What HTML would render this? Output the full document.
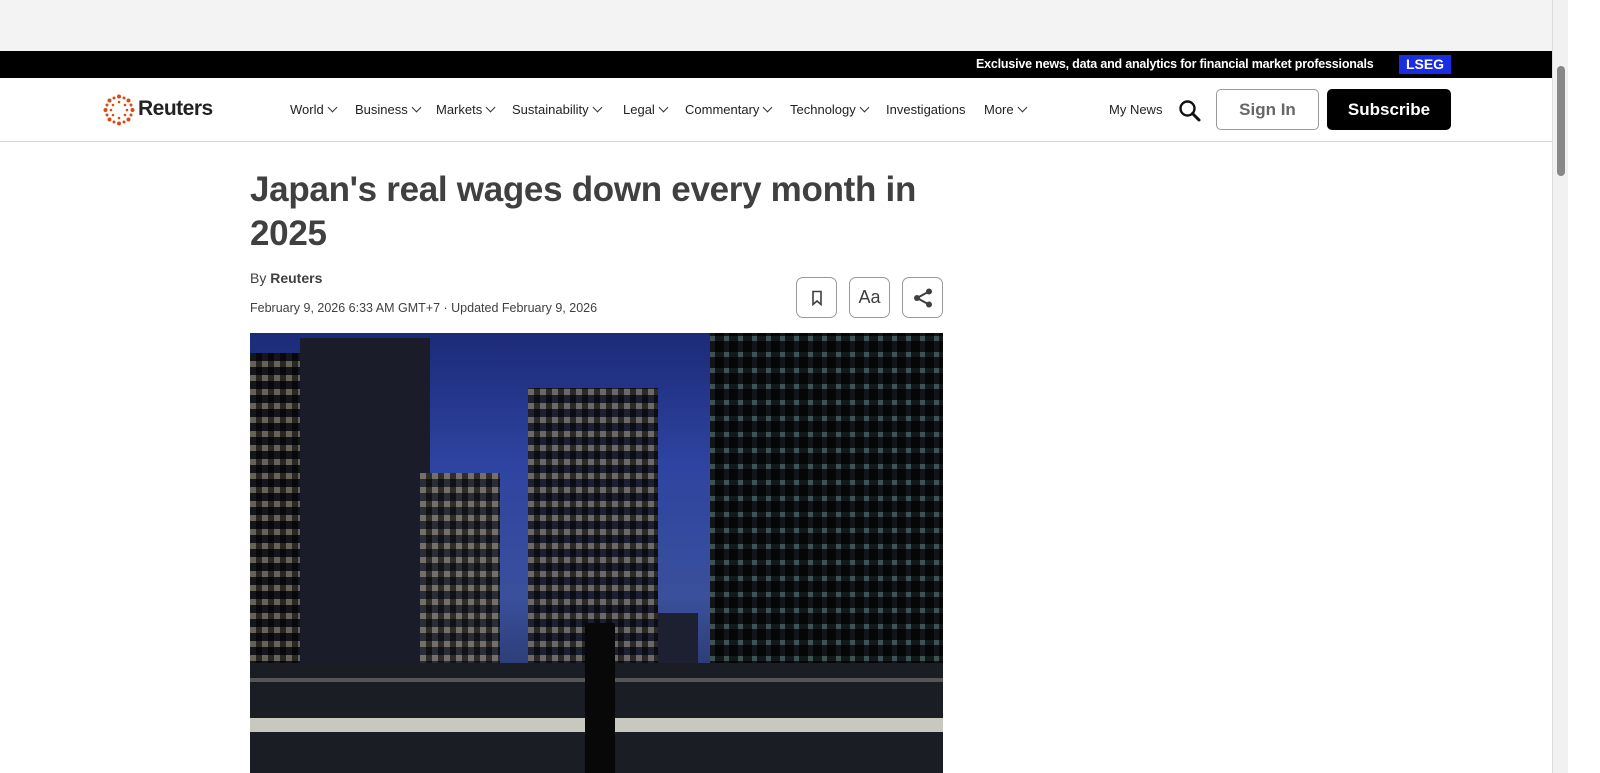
<!DOCTYPE html>
<html><head><meta charset="utf-8"><style>
*{margin:0;padding:0;box-sizing:border-box}
body{width:1600px;height:773px;overflow:hidden;background:#fff;font-family:"Liberation Sans",sans-serif;position:relative}
.top{position:absolute;left:0;top:0;width:1552px;height:51px;background:#f3f3f3}
.black{position:absolute;left:0;top:51px;width:1552px;height:27px;background:#000;color:#fff;font-size:12.5px;font-weight:bold}
.black .t{position:absolute;left:976px;top:6px;letter-spacing:-0.2px}
.black .l{position:absolute;left:1399px;top:4px;width:52px;height:19px;background:#1a2de0;text-align:center;font-size:14px;line-height:19px}
.nav{position:absolute;left:0;top:78px;width:1552px;height:64px;border-bottom:1px solid #d6d6d6}
.logo{position:absolute;left:103px;top:16px}
.logo span{position:absolute;left:35px;top:3px;font-size:21px;font-weight:bold;color:#222;letter-spacing:-0.5px}
.menu{position:absolute;top:24px;font-size:13px;color:#222}
.chev{display:inline-block;width:7px;height:7px;border-right:1.3px solid #333;border-bottom:1.3px solid #333;transform:rotate(45deg);margin-left:5px;position:relative;top:-3px}
.signin{position:absolute;left:1216px;top:11px;width:103px;height:41px;border:1px solid #999;border-radius:5px;color:#666;font-size:17px;font-weight:bold;text-align:center;line-height:39px}
.sub{position:absolute;left:1327px;top:11px;width:124px;height:41px;background:#000;border-radius:5px;color:#fff;font-size:17px;font-weight:bold;text-align:center;line-height:41px}
h1{position:absolute;left:250px;top:168px;width:700px;font-size:35px;line-height:44px;color:#404040;font-weight:bold;letter-spacing:-0.3px}
.by{position:absolute;left:250px;top:270px;font-size:14px;color:#404040}
.date{position:absolute;left:250px;top:301px;font-size:12.5px;color:#404040}
.btn{position:absolute;top:277px;width:41px;height:41px;border:1px solid #999;border-radius:7px;display:flex;align-items:center;justify-content:center;color:#404040}
.img{position:absolute;left:250px;top:333px;width:693px;height:440px;overflow:hidden;background:linear-gradient(180deg,#1c2a78 0%,#2e44a0 30%,#3a509c 60%,#1a2040 100%)}
.img div{position:absolute;background:#0c0f1c}
.w{background-image:repeating-linear-gradient(90deg,transparent 0 6px,rgba(0,0,0,.6) 6px 12px),repeating-linear-gradient(0deg,rgba(255,240,200,.35) 0 6px,transparent 6px 14px)!important}
.wb{background-image:repeating-linear-gradient(90deg,transparent 0 5px,rgba(0,0,0,.7) 5px 14px),repeating-linear-gradient(0deg,rgba(140,200,200,.35) 0 5px,transparent 5px 16px)!important}
.sb{position:absolute;left:1552px;top:0;width:16px;height:773px;background:#f1f1f1;border-left:1px solid #ddd}
.sb i{position:absolute;left:4px;top:66px;width:8px;height:110px;background:#888;border-radius:4px}
</style></head><body>
<div class="top"></div>
<div class="black"><span class="t">Exclusive news, data and analytics for financial market professionals</span><span class="l">LSEG</span></div>
<div class="nav">
 <div class="logo"><svg width="32" height="32" viewBox="0 0 32 32"><g fill="#dc4a14">
 <circle cx="16" cy="2.5" r="2"/><circle cx="25.5" cy="6.5" r="2"/><circle cx="29.5" cy="16" r="2"/><circle cx="25.5" cy="25.5" r="2"/><circle cx="16" cy="29.5" r="2"/><circle cx="6.5" cy="25.5" r="2"/><circle cx="2.5" cy="16" r="2"/><circle cx="6.5" cy="6.5" r="2"/>
 <circle cx="21" cy="4" r="1.5"/><circle cx="28" cy="11" r="1.5"/><circle cx="28" cy="21" r="1.5"/><circle cx="21" cy="28" r="1.5"/><circle cx="11" cy="28" r="1.5"/><circle cx="4" cy="21" r="1.5"/><circle cx="4" cy="11" r="1.5"/><circle cx="11" cy="4" r="1.5"/>
 <circle cx="16" cy="8" r="1.3"/><circle cx="22" cy="11" r="1.3"/><circle cx="24" cy="16" r="1.3"/><circle cx="22" cy="21" r="1.3"/><circle cx="16" cy="24" r="1.3"/><circle cx="10" cy="21" r="1.3"/><circle cx="8" cy="16" r="1.3"/><circle cx="10" cy="11" r="1.3"/></g></svg><span>Reuters</span></div>
 <div class="menu" style="left:290px">World<i class="chev"></i></div>
 <div class="menu" style="left:355px">Business<i class="chev"></i></div>
 <div class="menu" style="left:436px">Markets<i class="chev"></i></div>
 <div class="menu" style="left:512px">Sustainability<i class="chev"></i></div>
 <div class="menu" style="left:623px">Legal<i class="chev"></i></div>
 <div class="menu" style="left:685px">Commentary<i class="chev"></i></div>
 <div class="menu" style="left:790px">Technology<i class="chev"></i></div>
 <div class="menu" style="left:886px">Investigations</div>
 <div class="menu" style="left:984px">More<i class="chev"></i></div>
 <div class="menu" style="left:1109px">My News</div>
 <svg style="position:absolute;left:1178px;top:21px" width="24" height="24" viewBox="0 0 24 24"><circle cx="9.5" cy="9.5" r="7" fill="none" stroke="#111" stroke-width="2.4"/><path d="M14.5 14.5L21 21" stroke="#111" stroke-width="3" stroke-linecap="round"/></svg>
 <div class="signin">Sign In</div>
 <div class="sub">Subscribe</div>
</div>
<h1>Japan's real wages down every month in 2025</h1>
<div class="by">By <b>Reuters</b></div>
<div class="date">February 9, 2026 6:33 AM GMT+7 · Updated February 9, 2026</div>
<div class="btn" style="left:796px"><svg width="12" height="16" viewBox="0 0 12 16"><path d="M2 1.5h8v13l-4-3.5-4 3.5z" fill="none" stroke="#404040" stroke-width="1.6"/></svg></div>
<div class="btn" style="left:849px;font-size:18px">Aa</div>
<div class="btn" style="left:902px"><svg width="22" height="22" viewBox="0 0 22 22" fill="#404040"><circle cx="17" cy="4.5" r="3"/><circle cx="5" cy="11" r="3"/><circle cx="17" cy="17.5" r="3"/><path d="M5 11L17 4.5M5 11l12 6.5" stroke="#404040" stroke-width="2"/></svg></div>
<div class="img">
 <div class="w" style="left:0;top:20px;width:100px;height:420px;background-color:#15151c"></div>
 <div style="left:50px;top:5px;width:130px;height:435px;background:#1a1c2a"></div>
 <div class="w" style="left:170px;top:140px;width:80px;height:300px;background-color:#2a2c36"></div>
 <div class="w" style="left:278px;top:55px;width:130px;height:385px;background-color:#1c2030"></div>
 <div style="left:408px;top:280px;width:40px;height:160px;background:#1c2030"></div>
 <div class="wb" style="left:460px;top:0;width:233px;height:440px;background-color:#121418"></div>
 <div style="left:0;top:330px;width:693px;height:110px;background:#1b1d24"></div>
 <div style="left:0;top:345px;width:693px;height:4px;background:#555"></div>
 <div style="left:0;top:385px;width:693px;height:14px;background:#c8c8c0"></div>
 <div style="left:335px;top:290px;width:30px;height:150px;background:#080808"></div>
</div>
<div class="sb"><i></i></div>
</body></html>
